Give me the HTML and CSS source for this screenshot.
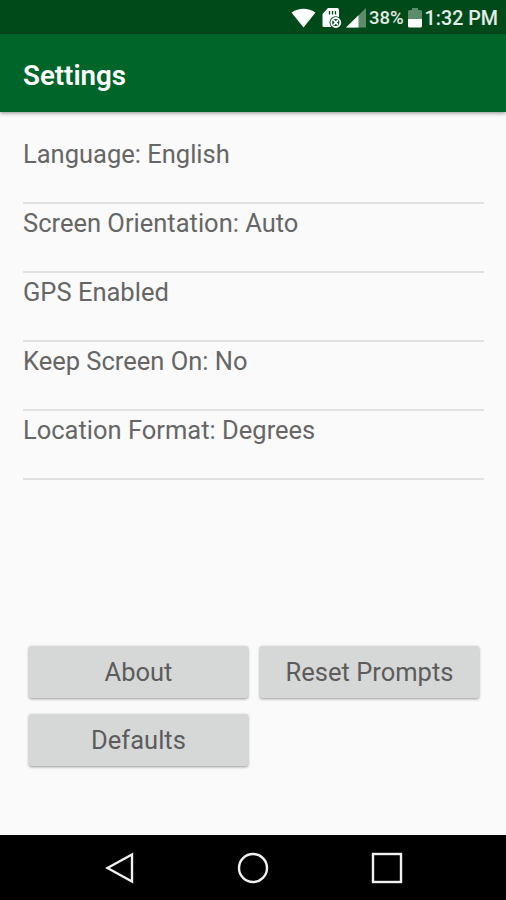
FILE: index.html
```html
<!DOCTYPE html>
<html lang="en">
  <head>
    <meta charset="UTF-8" />
    <title>Settings</title>
    <link rel="stylesheet" href="styles.css">
  </head>
  <body>
    <div class="status-bar">
      <svg class="status-icons" width="78" height="22" viewBox="0 0 78 22">
        <!-- wifi -->
        <path d="M0.5 5.5 Q12.5 -2 24.5 5.5 L12.5 20.5 Z" fill="#fff" />
        <!-- sd card -->
        <path d="M37 1 H46 Q48 1 48 2.500 V20 H33 Q31.500 20 31.500 18.500 V7 Z" fill="#fff" />
        <path d="M38.500 4 V7.500 M41.500 4 V7.500 M44.500 4 V7.500" stroke="#004a1a" stroke-width="1.300" />
        <circle cx="44.800" cy="15.500" r="6.300" fill="#004a1a" />
        <circle cx="44.800" cy="15.500" r="4.500" fill="none" stroke="#fff" stroke-width="1.800" />
        <path d="M42.500 13.200 l4.600 4.600 m0 -4.600 l-4.600 4.600" stroke="#fff" stroke-width="1.700" />
        <!-- signal -->
        <path d="M75 1 V20.500 H55 Z" fill="#5c8e6c" />
        <path d="M67.500 8.300 V20.500 H55 Z" fill="#fff" />
      </svg>
      <span class="percent">38%</span>
      <svg class="battery" width="14" height="20" viewBox="0 0 14 20">
        <path d="M4 0 H10 V2 H12.500 Q14 2 14 3.500 V11 H0 V3.500 Q0 2 1.500 2 H4 Z" fill="#5c8e6c" />
        <path d="M0 11 H14 V18 Q14 19.500 12.500 19.500 H1.500 Q0 19.500 0 18 Z" fill="#fff" />
      </svg>
      <span class="clock">1:32 PM</span>
    </div>

    <header class="app-bar">
      <h1>Settings</h1>
    </header>

    <main>
      <ul class="settings-list">
        <li>Language: English</li>
        <li>Screen Orientation: Auto</li>
        <li>GPS Enabled</li>
        <li>Keep Screen On: No</li>
        <li>Location Format: Degrees</li>
      </ul>

      <div class="buttons">
        <button>About</button>
        <button>Reset Prompts</button>
        <button>Defaults</button>
      </div>
    </main>

    <nav class="nav-bar">
      <svg width="32" height="32" viewBox="0 0 32 32">
        <path d="M29 2.500 V29.500 L4.500 16 Z" />
      </svg>
      <svg width="32" height="32" viewBox="0 0 32 32">
        <circle cx="16" cy="16" r="14" />
      </svg>
      <svg width="32" height="32" viewBox="0 0 32 32">
        <rect x="2" y="2" width="28" height="28" />
      </svg>
    </nav>
  </body>
</html>
```

FILE: styles.css
```css
body {
  margin: 0;
  height: 900px;
  display: flex;
  flex-direction: column;
  font-family: Roboto, sans-serif;
  background-color: #fafafa;
  color: #666;
  overflow: hidden;
}

.status-bar {
  display: flex;
  align-items: center;
  justify-content: flex-end;
  box-sizing: border-box;
  height: 34px;
  padding: 2px 8px 0 0;
  background-color: #004a1a;
  color: #e3ece5;
}

.percent {
  font-size: 18.5px;
  font-weight: 500;
}

.battery {
  margin: 0 3px 0 4px;
}

.clock {
  font-size: 19.7px;
  font-weight: 500;
}

.app-bar {
  display: flex;
  align-items: center;
  height: 78px;
  padding-left: 23px;
  background-color: #006529;
  box-shadow: 0 1px 4px rgba(0, 0, 0, 0.45);
}

h1 {
  margin: 5px 0 0;
  font-size: 27.7px;
  font-weight: 600;
  line-height: 32px;
  color: #fff;
}

main {
  flex: 1;
  padding: 23px 22px 0 23px;
}

.settings-list {
  margin: 0;
  padding: 0;
  list-style: none;
}

.settings-list li {
  box-sizing: border-box;
  height: 69px;
  padding-top: 4px;
  border-bottom: 2px solid #e1e1e1;
  font-size: 25.5px;
  line-height: 30px;
}

.buttons {
  display: grid;
  grid-template-columns: 219px 219px;
  gap: 16px 12px;
  margin: 166px 0 0 6px;
}

button {
  height: 52px;
  padding: 0 0 1px;
  border: none;
  border-radius: 2px;
  background-color: #d6d8d7;
  box-shadow: 0 1px 3px rgba(0, 0, 0, 0.4);
  color: #5c5c5c;
  font-family: inherit;
  font-size: 25.5px;
}

.nav-bar {
  display: flex;
  align-items: center;
  justify-content: center;
  gap: 102px;
  height: 65px;
  background-color: #000;
}

.nav-bar svg {
  fill: none;
  stroke: #f0f0f0;
  stroke-width: 2.4;
}
```
